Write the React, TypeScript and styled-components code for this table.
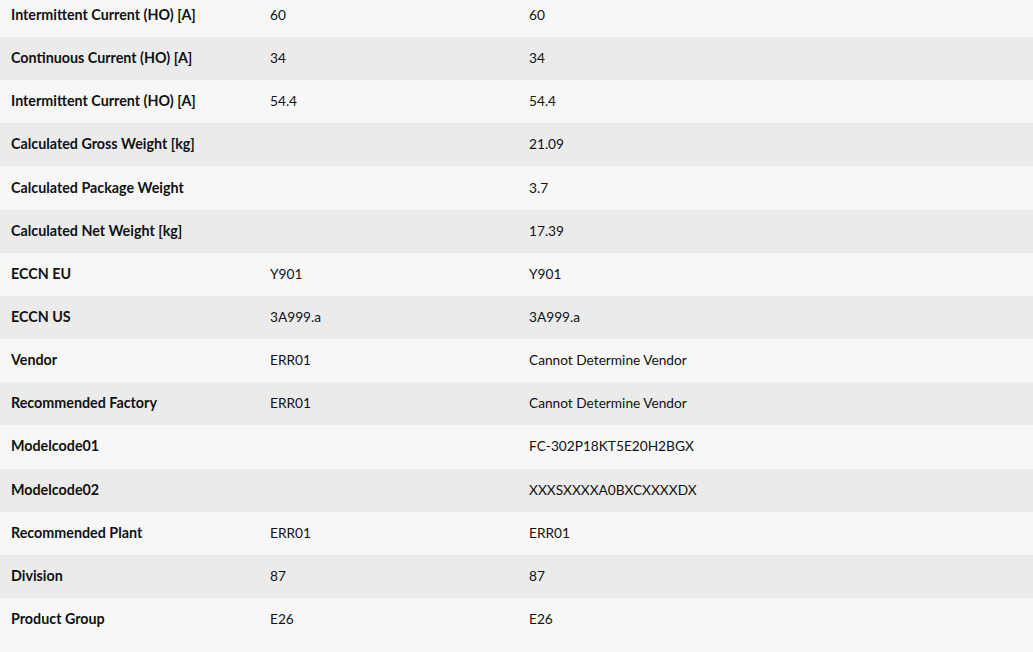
import React from 'react';
import styled, { createGlobalStyle } from 'styled-components';

const GlobalStyle = createGlobalStyle`
  html, body {
    margin: 0;
    padding: 0;
    background: #f7f7f7;
    overflow: hidden;
  }
`;

// Table shell, first row is scrolled a bit above the viewport
const Table = styled.div`
  display: flex;
  flex-direction: column;
  margin-top: -6.17px;
  width: 1033px;
  font-family: Lato, "Open Sans", sans-serif;
  color: #111;
`;

const Row = styled.div<{ $alt: boolean }>`
  display: grid;
  grid-template-columns: 259px 259px 1fr;
  align-items: center;
  height: 43.17px;
  background: ${(p) => (p.$alt ? '#ebebeb' : '#f7f7f7')};
`;

const Cell = styled.div<{ $head?: boolean }>`
  padding: 0 0 2px 11px;
  font-size: ${(p) => (p.$head ? '14.3px' : '13.7px')};
  font-weight: ${(p) => (p.$head ? 700 : 400)};
  white-space: nowrap;
`;

const rows: [string, string, string][] = [
  ['Intermittent Current (HO) [A]', '60', '60'],
  ['Continuous Current (HO) [A]', '34', '34'],
  ['Intermittent Current (HO) [A]', '54.4', '54.4'],
  ['Calculated Gross Weight [kg]', '', '21.09'],
  ['Calculated Package Weight', '', '3.7'],
  ['Calculated Net Weight [kg]', '', '17.39'],
  ['ECCN EU', 'Y901', 'Y901'],
  ['ECCN US', '3A999.a', '3A999.a'],
  ['Vendor', 'ERR01', 'Cannot Determine Vendor'],
  ['Recommended Factory', 'ERR01', 'Cannot Determine Vendor'],
  ['Modelcode01', '', 'FC-302P18KT5E20H2BGX'],
  ['Modelcode02', '', 'XXXSXXXXA0BXCXXXXDX'],
  ['Recommended Plant', 'ERR01', 'ERR01'],
  ['Division', '87', '87'],
  ['Product Group', 'E26', 'E26'],
];

const App = () => (
  <>
    <GlobalStyle />
    <Table>
      {rows.map(([label, a, b], i) => (
        <Row key={i} $alt={i % 2 === 1}>
          <Cell $head>{label}</Cell>
          <Cell>{a}</Cell>
          <Cell>{b}</Cell>
        </Row>
      ))}
    </Table>
  </>
);

export default App;
